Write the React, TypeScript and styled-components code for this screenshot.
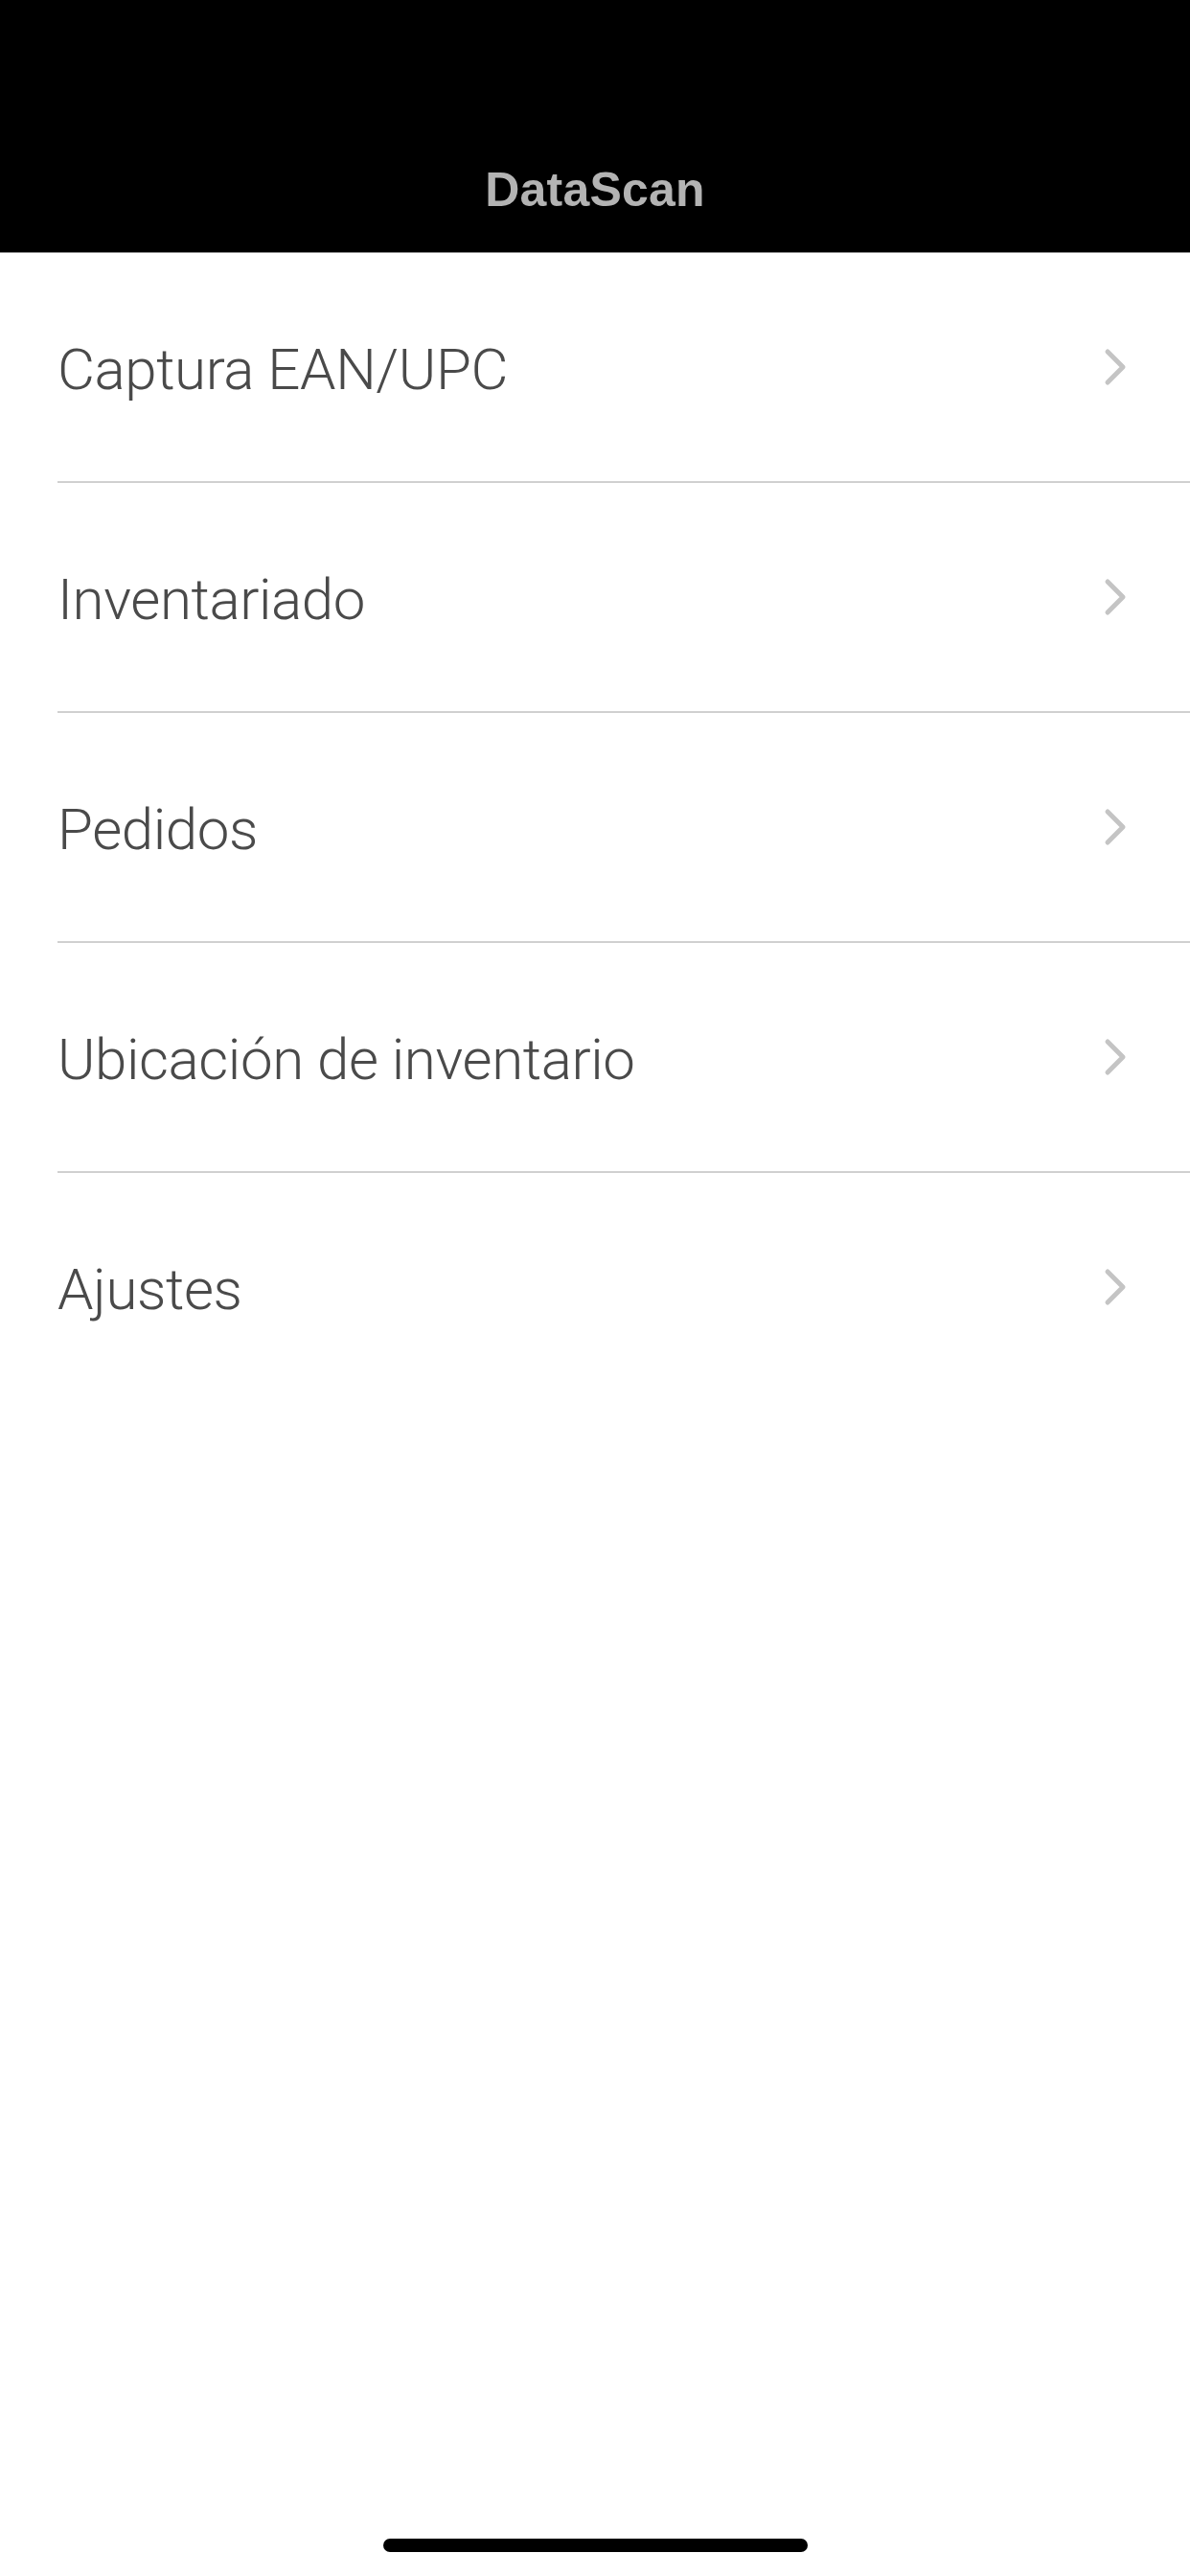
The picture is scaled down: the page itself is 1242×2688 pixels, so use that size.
import React from "react";
import styled, { createGlobalStyle } from "styled-components";

const GlobalStyle = createGlobalStyle`
  html, body {
    margin: 0;
    padding: 0;
    background: #ffffff;
  }
  * {
    box-sizing: border-box;
  }
`;

const Screen = styled.div`
  width: 1242px;
  min-height: 2688px;
  display: flex;
  flex-direction: column;
  background: #ffffff;
  font-family: "Liberation Sans", Arial, sans-serif;
`;

const NavBar = styled.header`
  height: 264px;
  padding-top: 132px;
  background: #000000;
  border-bottom: 1px solid #8a8a8a;
  display: flex;
  align-items: center;
  justify-content: center;
`;

const Title = styled.h1`
  margin: 0;
  font-size: 50px;
  font-weight: 700;
  color: #b3b3b3;
  letter-spacing: 0.2px;
`;

const Menu = styled.ul`
  list-style: none;
  margin: 0;
  padding: 0;
`;

const Row = styled.li`
  padding-left: 60px;
`;

const RowInner = styled.div<{ $last?: boolean }>`
  height: 240px;
  display: flex;
  align-items: center;
  justify-content: space-between;
  padding-right: 66px;
  border-bottom: 2px solid ${(p) => (p.$last ? "transparent" : "#d0d0d0")};
`;

const Label = styled.span`
  font-family: "Roboto", "Liberation Sans", sans-serif;
  font-weight: 300;
  font-size: 60px;
  color: #4a4a4a;
  letter-spacing: -0.4px;
  padding-top: 5px;
`;

const Chevron = () => (
  <svg width="24" height="40" viewBox="0 0 24 40" fill="none">
    <path
      d="M4 4 L20 20 L4 36"
      stroke="#c4c4c4"
      strokeWidth="5"
      strokeLinecap="round"
      strokeLinejoin="round"
    />
  </svg>
);

const Spacer = styled.div`
  flex: 1;
`;

const HomeArea = styled.div`
  height: 39px;
  display: flex;
  justify-content: center;
  align-items: flex-start;
`;

const HomeBar = styled.div`
  width: 443px;
  height: 14px;
  border-radius: 7px;
  background: #000000;
`;

const items = [
  "Captura EAN/UPC",
  "Inventariado",
  "Pedidos",
  "Ubicación de inventario",
  "Ajustes",
];

const App = () => {
  return (
    <>
      <GlobalStyle />
      <Screen>
        <NavBar>
          <Title>DataScan</Title>
        </NavBar>
        <Menu>
          {items.map((item, index) => (
            <Row key={item}>
              <RowInner $last={index === items.length - 1}>
                <Label>{item}</Label>
                <Chevron />
              </RowInner>
            </Row>
          ))}
        </Menu>
        <Spacer />
        <HomeArea>
          <HomeBar />
        </HomeArea>
      </Screen>
    </>
  );
};

export default App;
